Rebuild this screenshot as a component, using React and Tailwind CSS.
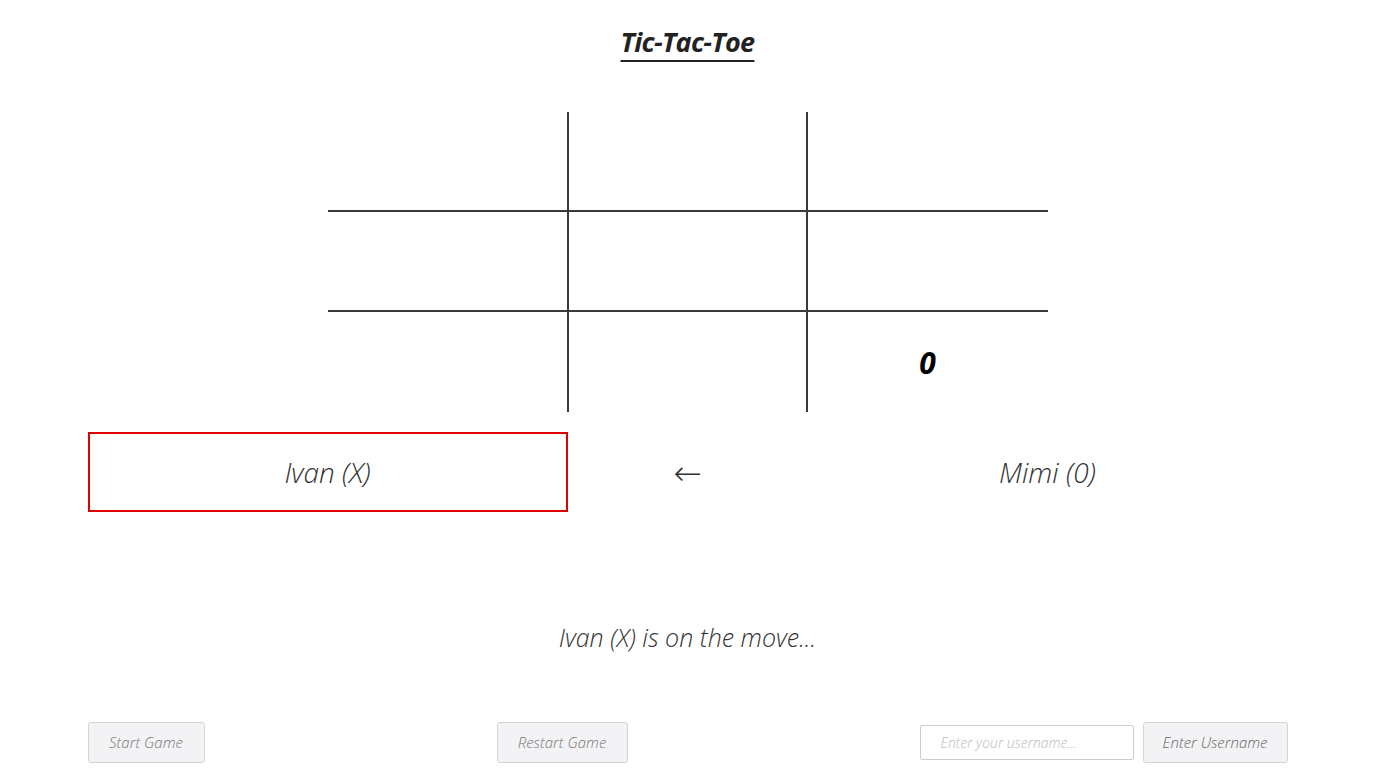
import React, { useState } from "react";

const font = { fontFamily: '"Open Sans", "Liberation Sans", sans-serif' };

const Cell = ({ index, value }) => {
  const row = Math.floor(index / 3);
  const col = index % 3;
  return (
    <div
      className={`h-[100px] flex items-center justify-center text-[30px] font-bold italic text-black border-[#3a3a3a] ${
        row < 2 ? "border-b-2" : ""
      } ${col < 2 ? "border-r-2" : ""}`}
    >
      {value}
    </div>
  );
};

const App = () => {
  const [board] = useState(["", "", "", "", "", "", "", "", "0"]);
  const [username, setUsername] = useState("");

  return (
    <div className="min-h-screen bg-white text-[#333]" style={font}>
      <div className="w-[1200px] mx-auto flex flex-col items-center">
        <h1 className="mt-[22px] text-[27px] leading-[40px] font-bold italic text-[#222] underline decoration-2 underline-offset-[8px] tracking-tight">
          Tic-Tac-Toe
        </h1>

        <div className="mt-[50px] grid grid-cols-[241px_239px_240px]">
          {board.map((value, i) => (
            <Cell key={i} index={i} value={value} />
          ))}
        </div>

        <div className="mt-[20px] w-full grid grid-cols-[480px_240px_480px] h-[80px]">
          <div className="border-2 border-[#e00000] flex items-center justify-center text-[28px] font-light italic">
            Ivan (X)
          </div>
          <div
            className="flex items-center justify-center text-[34px] leading-none pt-[2px]"
            style={{ fontFamily: '"DejaVu Sans", sans-serif', fontWeight: 200 }}
          >
            ←
          </div>
          <div className="flex items-center justify-center text-[28px] font-light italic">
            Mimi (0)
          </div>
        </div>

        <p className="mt-[107px] text-[25px] leading-[36px] font-light italic">
          Ivan (X) is on the move...
        </p>

        <div className="mt-[67px] w-full flex justify-between items-center">
          <button className="h-[41px] w-[117px] bg-[#f3f3f5] border border-[#d4d4d8] rounded-[3px] text-[15px] italic font-light text-[#777]">
            Start Game
          </button>
          <button className="h-[41px] w-[131px] bg-[#f3f3f5] border border-[#d4d4d8] rounded-[3px] text-[15px] italic font-light text-[#777]">
            Restart Game
          </button>
          <div className="flex items-center gap-[9px]">
            <input
              value={username}
              onChange={(e) => setUsername(e.target.value)}
              placeholder="Enter your username..."
              className="h-[35px] w-[214px] border border-[#ccc] rounded-[2px] px-[20px] text-[14px] italic font-light placeholder:text-[#bbb] outline-none"
            />
            <button className="h-[41px] w-[145px] bg-[#f3f3f5] border border-[#d4d4d8] rounded-[3px] text-[15px] italic font-light text-[#666]">
              Enter Username
            </button>
          </div>
        </div>
      </div>
    </div>
  );
};

export default App;
